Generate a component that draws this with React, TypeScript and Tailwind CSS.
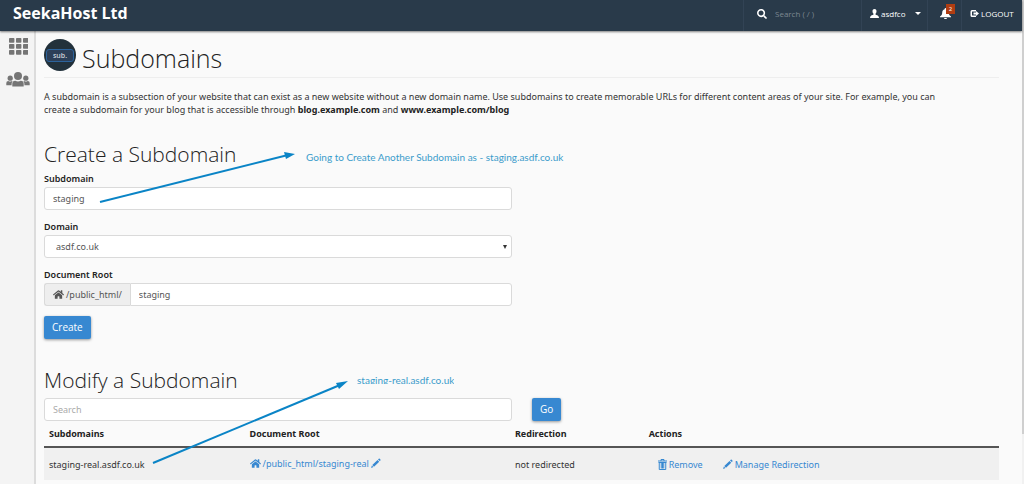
import type { ReactNode, SVGProps } from "react";
import { FaHome, FaSearch } from "react-icons/fa";

interface SubdomainRow {
  name: string;
  root: string;
  redirection: string;
}

const ROWS: SubdomainRow[] = [
  { name: "staging-real.asdf.co.uk", root: "/public_html/staging-real", redirection: "not redirected" },
];

const INPUT =
  "h-[23px] w-full rounded-[3px] border border-[#dadada] bg-white px-2 text-[9px] text-[#555] placeholder:text-[#aaa] outline-none";
const BUTTON =
  "h-[23px] rounded-[2px] bg-[#3788d1] px-2 font-['Open_Sans',sans-serif] text-[10px] text-white shadow-[0_1px_3px_rgba(0,0,0,0.4)]";
const HEADING = "mb-1 font-['Open_Sans',sans-serif] text-[21px] leading-[27px] font-light text-[#222]";
const NOTE = "absolute whitespace-nowrap font-['Lato',sans-serif] text-[10px] leading-[14px] text-[#3a9ccb]";

export default function App() {
  return (
    <div className="flex min-h-screen bg-[#fafafa] font-['Noto_Sans',sans-serif] text-[9px] leading-[13px] text-[#333]">
      <div className="flex min-w-0 flex-1 flex-col">
        <TopBar />
        <div className="flex flex-1">
          <SideNav />
          <main className="relative min-w-0 flex-1 pt-2 pr-[23px] pl-2">
            <PageTitle />
            <p className="mt-3">
              A subdomain is a subsection of your website that can exist as a new website without a new domain name.
              Use subdomains to create memorable URLs for different content areas of your site. For example, you can
              <br />
              create a subdomain for your blog that is accessible through <b className="text-[#222]">blog.example.com</b>{" "}
              and <b className="text-[#222]">www.example.com/blog</b>
            </p>
            <CreateForm />
            <ModifySection />
            <Annotations />
          </main>
        </div>
      </div>
      <div className="w-[2px] bg-[#f1f1f1]">
        <div className="h-[434px] bg-[#cfcfcf]" />
      </div>
    </div>
  );
}

function TopBar() {
  return (
    <header className="relative z-10 flex h-[31px] items-stretch bg-[#293a4a] font-['Open_Sans',sans-serif] text-[8px] text-white shadow-[0_1px_2px_rgba(0,0,0,0.5)]">
      <div className="flex flex-1 items-center pb-1 pl-[13px] text-[16px] font-bold">SeekaHost Ltd</div>
      <label className="flex w-[118px] items-center border-l border-[#324355] pb-1 pl-[13px]">
        <FaSearch size={10} aria-label="Search" />
        <input
          type="text"
          placeholder="Search ( / )"
          className="ml-2 w-[70px] bg-transparent text-[8px] text-white outline-none placeholder:text-[#7d8891]"
        />
      </label>
      <button className="flex w-[66px] items-center border-l border-[#324355] pb-1 pl-2">
        <UserIcon className="mr-[2px] size-[9px]" />
        asdfco
        <svg viewBox="0 0 6 3" className="ml-[9px] w-[6px]" fill="currentColor">
          <path d="M0 0h6L3 3z" />
        </svg>
      </button>
      <button className="relative flex w-[34px] items-center border-l border-[#324355] pb-1 pl-3" aria-label="Notifications">
        <BellIcon className="size-[11px]" />
        <span className="absolute top-1 left-[18px] h-[10px] w-[9px] bg-[#b03d12] text-center text-[6px] leading-[10px]">
          2
        </span>
      </button>
      <a href="#logout" className="flex w-[61px] items-center border-l border-[#324355] pb-1 pl-2">
        <LogoutIcon className="mr-[2px] size-[9px]" />
        LOGOUT
      </a>
    </header>
  );
}

function SideNav() {
  return (
    <nav className="flex w-9 flex-col items-center gap-[17px] border-r-2 border-[#dcdcdc] bg-[#f4f4f4] pt-[7px] pl-[2px] text-[#757575]">
      <a href="#tools" aria-label="Tools">
        <svg viewBox="0 0 19 17" className="w-[19px]" fill="currentColor">
          {[0, 6, 12].map((y) =>
            [0, 7, 14].map((x) => <rect key={`${x}-${y}`} x={x} y={y} width="5.4" height="4.8" rx="0.8" />),
          )}
        </svg>
      </a>
      <a href="#users" aria-label="User manager">
        <svg viewBox="0 0 24 15" className="w-[24px]" fill="currentColor">
          <circle cx="12" cy="4" r="4" />
          <circle cx="4.2" cy="6.2" r="2.6" />
          <circle cx="19.8" cy="6.2" r="2.6" />
          <path d="M6.3 14.5v-2.8a3 3 0 0 1 3-3c1.8.9 3.600.9 5.400 0a3 3 0 0 1 3 3v2.800z" />
          <path d="M.3 13.300v-2.300a2 2 0 0 1 2-2c1.200.7 2.400.7 3.600 0l.7.3a4 4 0 0 0-1 2.600v1.400z" />
          <path d="M23.700 13.300v-2.300a2 2 0 0 0-2-2c-1.200.7-2.400.7-3.600 0l-.7.3a4 4 0 0 1 1 2.600v1.400z" />
        </svg>
      </a>
    </nav>
  );
}

function PageTitle() {
  return (
    <div className="flex h-[39px] items-start gap-[6px] border-b border-[#eee] font-['Open_Sans',sans-serif]">
      <div className="flex size-[32px] shrink-0 items-center justify-center rounded-full bg-[#22313b]">
        <span className="flex h-[13px] w-[28px] items-center justify-center rounded-[3px] border border-[#2c639c] bg-[#2c3f58] text-[7px] font-semibold text-[#ccd3da]">
          sub.
        </span>
      </div>
      <h1 className="text-[25px] leading-[38px] font-light text-[#222]">Subdomains</h1>
    </div>
  );
}

function Field({ id, label, children }: { id: string; label: string; children: ReactNode }) {
  return (
    <div className="mb-[10px]">
      <label htmlFor={id} className="mb-[2px] block font-semibold text-[#222]">
        {label}
      </label>
      {children}
    </div>
  );
}

function CreateForm() {
  return (
    <form className="mt-[25px] w-[49%]" onSubmit={(e) => e.preventDefault()}>
      <h2 className={HEADING}>Create a Subdomain</h2>
      <Field id="subdomain" label="Subdomain">
        <input id="subdomain" type="text" defaultValue="staging" className={INPUT} />
      </Field>
      <Field id="domain" label="Domain">
        <div className="relative">
          <select id="domain" className={`${INPUT} appearance-none pl-[11px]`}>
            <option>asdf.co.uk</option>
          </select>
          <svg viewBox="0 0 4 4" className="pointer-events-none absolute top-[10px] right-[5px] w-1" fill="#333">
            <path d="M0 0h4L2 4z" />
          </svg>
        </div>
      </Field>
      <Field id="docroot" label="Document Root">
        <div className="flex">
          <span className="flex h-[23px] items-center gap-[2px] rounded-l-[3px] border border-r-0 border-[#dadada] bg-[#eee] px-2 text-[#555]">
            <FaHome size={11} />
            /public_html/
          </span>
          <input
            id="docroot"
            type="text"
            defaultValue="staging"
            className={`${INPUT} min-w-0 flex-1 rounded-l-none`}
          />
        </div>
      </Field>
      <button type="submit" className={BUTTON}>
        Create
      </button>
    </form>
  );
}

function ModifySection() {
  return (
    <section className="mt-7">
      <h2 className={HEADING}>Modify a Subdomain</h2>
      <form className="flex" onSubmit={(e) => e.preventDefault()}>
        <div className="mr-5 w-[49%]">
          <input type="text" placeholder="Search" aria-label="Search subdomains" className={INPUT} />
        </div>
        <button type="submit" className={BUTTON}>
          Go
        </button>
      </form>
      <table className="w-full table-fixed text-left">
        <thead>
          <tr className="h-[26px] border-b-2 border-[#555] text-[#222]">
            <th className="w-[21%] pl-[5px]">Subdomains</th>
            <th className="w-[28%] pl-[5px]">Document Root</th>
            <th className="w-[14%] pl-[3px]">Redirection</th>
            <th className="pl-[3px]">Actions</th>
          </tr>
        </thead>
        <tbody>
          {ROWS.map((row) => (
            <tr key={row.name} className="h-[33px] bg-[#f0f0f0]">
              <td className="pl-[5px]">{row.name}</td>
              <td className="pl-[5px]">
                <a href="#root" className="inline-flex items-center gap-[2px] text-[#3788d1]">
                  <FaHome size={11} />
                  {row.root}
                  <PencilIcon className="size-[10px]" />
                </a>
              </td>
              <td className="pl-[3px]">{row.redirection}</td>
              <td className="pl-3">
                <div className="flex gap-5 text-[#3788d1]">
                  <a href="#remove" className="flex items-center gap-[2px]">
                    <TrashIcon className="h-[11px] w-[9px]" />
                    Remove
                  </a>
                  <a href="#redirect" className="flex items-center gap-[2px]">
                    <PencilIcon className="size-[10px]" />
                    Manage Redirection
                  </a>
                </div>
              </td>
            </tr>
          ))}
        </tbody>
      </table>
    </section>
  );
}

// Notes and arrows drawn on top of the page, in main's own coordinates.
function Annotations() {
  return (
    <div className="pointer-events-none absolute inset-0 overflow-hidden">
      <svg width="400" height="453" className="block" fill="#0a84c6" stroke="#0a84c6">
        <line x1="64" y1="171" x2="252" y2="124" strokeWidth="2" />
        <path d="M259 123l-11-2 2 7z" stroke="none" />
        <line x1="117" y1="432" x2="304" y2="354" strokeWidth="2" />
        <path d="M312 350l-12 2 3 6z" stroke="none" />
      </svg>
      <span className={`${NOTE} top-[119px] left-[270px]`}>
        Going to Create Another Subdomain as - staging.asdf.co.uk
      </span>
      <span className={`${NOTE} top-[342px] left-[321px] h-[11px] overflow-hidden`}>staging-real.asdf.co.uk</span>
    </div>
  );
}

function UserIcon(props: SVGProps<SVGSVGElement>) {
  return (
    <svg viewBox="0 0 18 18" fill="currentColor" {...props}>
      <path d="M9 0c2.500 0 4 1.800 4 4.500 0 2-.8 4-2 5v1.700c1.500 1.200 6 2 6.500 4.300L18 18H0l.5-2.500C1 13.200 5.500 12.400 7 11.200V9.500c-1.200-1-2-3-2-5C5 1.800 6.500 0 9 0z" />
    </svg>
  );
}

function BellIcon(props: SVGProps<SVGSVGElement>) {
  return (
    <svg viewBox="0 0 20 20" fill="currentColor" {...props}>
      <path d="M10 0a1.500 1.500 0 0 1 1.500 1.500v.8C14.500 3 16 5.500 16 8.500c0 3.500 1.500 5 4 7V17H0v-1.500c2.500-2 4-3.500 4-7C4 5.500 5.500 3 8.500 2.300v-.8A1.500 1.500 0 0 1 10 0zM7.500 18h5a2.500 2.500 0 0 1-5 0z" />
    </svg>
  );
}

function LogoutIcon(props: SVGProps<SVGSVGElement>) {
  return (
    <svg viewBox="0 0 18 16" fill="currentColor" {...props}>
      <path d="M12 1H4a3 3 0 0 0-3 3v8a3 3 0 0 0 3 3h8v-3H4.500a.5.5 0 0 1-.5-.5v-7a.5.5 0 0 1 .5-.5H12z" />
      <path d="M7 6h5V3l6 5-6 5v-3H7z" />
    </svg>
  );
}

function PencilIcon(props: SVGProps<SVGSVGElement>) {
  return (
    <svg viewBox="0 0 20 20" fill="currentColor" {...props}>
      <path d="M15.500 1.500a1.500 1.500 0 0 1 2 0l1.300 1.300a1.500 1.500 0 0 1 0 2L17.500 6 14 2.800zM13 4l3.500 3.300L6 17.500 2.600 14zM1.800 15.200l3 3L0 20z" />
    </svg>
  );
}

function TrashIcon(props: SVGProps<SVGSVGElement>) {
  return (
    <svg viewBox="0 0 18 22" fill="none" stroke="currentColor" strokeWidth="2" {...props}>
      <path d="M0 4h18M6 4V1h6v3M2.500 7v14h13V7M6.500 8v11M9 8v11M11.500 8v11M1 7h16" />
    </svg>
  );
}
